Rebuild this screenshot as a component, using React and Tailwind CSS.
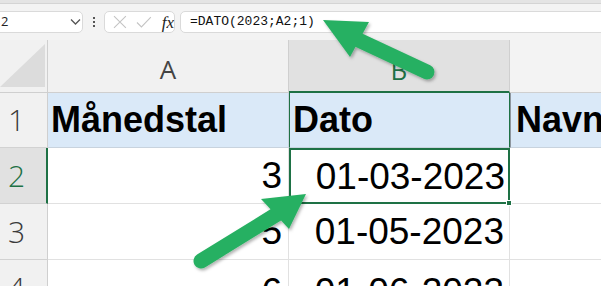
import React from 'react'

const mono = { fontFamily: '"Liberation Mono", monospace' }
const head = { fontFamily: '"Liberation Sans", Arial, sans-serif' }
const light = { fontFamily: '"Open Sans", sans-serif' }

function Toolbar() {
  return (
    <div className="h-[40px] bg-[#f3f3f3] border-t-[3px] border-[#e4e4e4] flex items-center relative">
      <div className="absolute top-0 left-0 right-0 h-px bg-[#d4d4d4]" />
      <div className="ml-[-8px] w-[91px] h-[22px] mt-[1px] bg-white border border-[#dadada] rounded-[5px] flex items-center justify-between pl-[8px] pr-[1px]">
        <span className="text-[13px] text-[#222]" style={light}>2</span>
        <svg width="11" height="8" viewBox="0 0 11 8"><path d="M1 1.5 L5.5 6 L10 1.5" fill="none" stroke="#555" strokeWidth="1.3" /></svg>
      </div>
      <div className="w-[21px] flex flex-col items-center gap-[2px] mt-[1px]">
        <span className="w-[2px] h-[2px] bg-[#555]" />
        <span className="w-[2px] h-[2px] bg-[#555]" />
        <span className="w-[2px] h-[2px] bg-[#555]" />
      </div>
      <div className="w-[71px] h-[22px] mt-[1px] bg-white border border-[#dadada] rounded-[5px] flex items-center pl-[8px] gap-[9px]">
        <svg width="14" height="14" viewBox="0 0 14 14"><path d="M1 1 L13 13 M13 1 L1 13" stroke="#c4c4c4" strokeWidth="1.1" /></svg>
        <svg width="16" height="12" viewBox="0 0 16 12"><path d="M1 6.5 L5.5 11 L15 1" fill="none" stroke="#c4c4c4" strokeWidth="1.1" /></svg>
        <span className="text-[17px] italic text-[#222] leading-none ml-[1px]" style={{ fontFamily: '"Liberation Serif", serif' }}>fx</span>
      </div>
      <div className="ml-[5px] flex-1 mr-[-10px] h-[22px] mt-[1px] bg-white border border-[#dadada] rounded-[5px] flex items-center pl-[9px]">
        <span className="text-[13px] text-[#111]" style={mono}>=DATO(2023;A2;1)</span>
      </div>
    </div>
  )
}

function RowHead({ n, sel }) {
  return (
    <div className={`border-b border-[#d2d2d2] flex items-center pl-[8px] ${sel ? 'bg-[#e1e1e1] text-[#1e7145] border-r-2 border-r-[#1e7145]' : 'bg-[#f1f1f1] text-[#3b3b3b] border-r border-r-[#cfcfcf]'}`}>
      <span className="text-[30px] font-light leading-none" style={light}>{n}</span>
    </div>
  )
}

function Grid() {
  return (
    <div className="grid grid-cols-[48px_241px_221px_1fr] grid-rows-[53px_55px_56px_56px_56px]">
      {/* column headers */}
      <div className="bg-[#f1f1f1] border-b border-r border-[#cfcfcf] relative overflow-hidden">
        <svg className="absolute left-0 top-0" width="48" height="53"><path d="M45 4 L45 47 L0 47 Z" fill="#dcdcdc" /></svg>
      </div>
      <div className="bg-[#f1f1f1] border-b border-r border-[#cfcfcf] flex items-end justify-center pb-[10px]">
        <span className="text-[26px] leading-none text-[#444]" style={light}>A</span>
      </div>
      <div className="bg-[#e1e1e1] border-b-2 border-b-[#1e7145] border-r border-r-[#cfcfcf] flex items-end justify-center pb-[8px]">
        <span className="text-[26px] leading-none text-[#1e7145]" style={light}>B</span>
      </div>
      <div className="bg-[#f3f3f3] border-b border-[#cfcfcf]" />

      {/* row 1 */}
      <RowHead n="1" />
      <div className="bg-[#dae9f8] border-b border-r border-[#c8d3de] flex items-center pl-[3px]">
        <span className="text-[36px] font-bold leading-none text-black" style={head}>Månedstal</span>
      </div>
      <div className="bg-[#dae9f8] border-b border-[#c8d3de] border-x border-x-[#1e7145] flex items-center pl-[3px]">
        <span className="text-[36px] font-bold leading-none text-black" style={head}>Dato</span>
      </div>
      <div className="bg-[#dae9f8] border-b border-[#c8d3de] border-l border-l-[#8e969e] flex items-center pl-[5px]">
        <span className="text-[36px] font-bold leading-none text-black whitespace-nowrap" style={head}>Navn</span>
      </div>

      {/* row 2 */}
      <RowHead n="2" sel />
      <div className="bg-white border-b border-r border-[#e1e1e1] flex items-center justify-end pr-[6px]">
        <span className="text-[37px] leading-none text-black" style={head}>3</span>
      </div>
      <div className="bg-white border-2 border-[#1e7145] flex items-center justify-end pr-[3px] relative">
        <span className="text-[37px] leading-none text-black" style={head}>01-03-2023</span>
        <span className="absolute right-[-4px] bottom-[-4px] w-[6px] h-[6px] bg-[#1e7145] border border-white" />
      </div>
      <div className="bg-white border-b border-[#e1e1e1]" />

      {/* row 3 */}
      <RowHead n="3" />
      <div className="bg-white border-b border-r border-[#e1e1e1] flex items-center justify-end pr-[6px]">
        <span className="text-[37px] leading-none text-black" style={head}>5</span>
      </div>
      <div className="bg-white border-b border-r border-[#e1e1e1] flex items-center justify-end pr-[5px]">
        <span className="text-[37px] leading-none text-black" style={head}>01-05-2023</span>
      </div>
      <div className="bg-white border-b border-[#e1e1e1]" />

      {/* row 4 */}
      <RowHead n="4" />
      <div className="bg-white border-r border-[#e1e1e1] flex items-start justify-end pr-[6px] pt-[13px] overflow-hidden">
        <span className="text-[37px] leading-none text-black" style={head}>6</span>
      </div>
      <div className="bg-white border-r border-[#e1e1e1] flex items-start justify-end pr-[5px] pt-[13px] overflow-hidden">
        <span className="text-[37px] leading-none text-black" style={head}>01-06-2023</span>
      </div>
      <div className="bg-white" />
    </div>
  )
}

function Arrows() {
  return (
    <svg className="absolute inset-0 pointer-events-none" width="601" height="286" viewBox="0 0 601 286">
      <defs>
        <filter id="sh" x="-20%" y="-20%" width="140%" height="140%">
          <feDropShadow dx="1.5" dy="2" stdDeviation="1.5" floodColor="#000" floodOpacity="0.3" />
        </filter>
      </defs>
      <g fill="#28b062" stroke="#28b062" filter="url(#sh)">
        <line x1="427" y1="72" x2="352" y2="37" strokeWidth="15" strokeLinecap="round" />
        <path d="M323 20 L369 22 L350 57 Z" stroke="none" />
        <line x1="201" y1="261" x2="282" y2="211" strokeWidth="15" strokeLinecap="round" />
        <path d="M306 194 L261 199 L289 229 Z" stroke="none" />
      </g>
    </svg>
  )
}

export default function App() {
  return (
    <div className="w-[601px] h-[286px] overflow-hidden relative bg-white">
      <Toolbar />
      <Grid />
      <Arrows />
    </div>
  )
}
